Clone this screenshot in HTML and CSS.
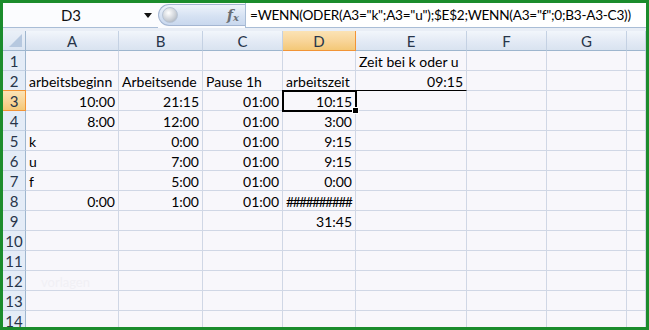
FILE: index.html
```html
<!DOCTYPE html>
<html lang="de">
<head>
    <meta charset="UTF-8">
    <title>arbeitszeit</title>
    <link rel="stylesheet" href="styles.css">
</head>
<body>
    <div class="frame">
        <div class="formula-bar">
            <div class="name-box">D3</div>
            <div class="name-drop">
                <svg width="8" height="5" viewBox="0 0 8 5"><path d="M0 0H8L4 5Z" fill="#111"/></svg>
            </div>
            <div class="fx-pill">
                <span class="knob"></span>
                <span class="fx">f<sub>x</sub></span>
            </div>
            <div class="formula">=WENN(ODER(A3="k";A3="u");$E$2;WENN(A3="f";0;B3-A3-C3))</div>
        </div>
        <div class="sheet" id="sheet"></div>
    </div>

    <script>
        const cols = ['A', 'B', 'C', 'D', 'E', 'F', 'G', ''];
        // jede Zeile: [A, B, C, D, E]  -- "#" vorne = Zahl, rechtsbündig
        const rows = [
            ['', '', '', '', 'Zeit bei k oder u'],
            ['arbeitsbeginn', 'Arbeitsende', 'Pause 1h', 'arbeitszeit', '#09:15'],
            ['#10:00', '#21:15', '#01:00', '#10:15', ''],
            ['#8:00', '#12:00', '#01:00', '#3:00', ''],
            ['k', '#0:00', '#01:00', '#9:15', ''],
            ['u', '#7:00', '#01:00', '#9:15', ''],
            ['f', '#5:00', '#01:00', '#0:00', ''],
            ['#0:00', '#1:00', '#01:00', '###########', ''],
            ['', '', '', '#31:45', ''],
            [], [], [], [], []
        ];

        const sheet = document.getElementById('sheet');

        function cell(cls, text) {
            const div = document.createElement('div');
            div.className = cls;
            if (text) div.textContent = text;
            sheet.appendChild(div);
            return div;
        }

        // Kopfzeile
        cell('corner');
        cols.forEach(c => cell(c === 'D' ? 'col-head active' : 'col-head', c));

        rows.forEach((row, r) => {
            const n = r + 1;
            cell(n === 3 ? 'row-head active' : 'row-head', String(n));
            for (let i = 0; i < cols.length; i++) {
                let value = row[i] || '';
                let cls = 'cell';
                if (value.startsWith('#')) {
                    cls += ' num';
                    value = value.slice(1);
                }
                if (value.startsWith('###')) cls += ' overflow';
                const div = cell(cls, value);
                if (n === 2 && i === 4) div.classList.add('underline');
                if (n === 3 && i === 3) {
                    div.classList.add('selected');
                    const handle = document.createElement('span');
                    handle.className = 'fill-handle';
                    div.appendChild(handle);
                }
                if (n === 12 && i === 0) {
                    const mark = document.createElement('span');
                    mark.className = 'watermark';
                    mark.textContent = 'vorlagen';
                    div.appendChild(mark);
                }
            }
        });
    </script>
</body>
</html>
```

FILE: styles.css
```css
body {
    margin: 0;
    font-family: Lato, "Open Sans", sans-serif;
    font-size: 14px;
    color: #000;
}
.frame {
    width: 649px;
    height: 330px;
    box-sizing: border-box;
    border: 3px solid #1b8c2c;
    overflow: hidden;
    background: #f8f7fb;
}
.formula-bar {
    display: flex;
    align-items: stretch;
    height: 28px;
    box-sizing: border-box;
    border-bottom: 3px solid #e9eef6;
    background: #fbfcfe;
}
.name-box {
    flex: 0 0 134px;
    padding-left: 2px;
    box-sizing: border-box;
    display: flex;
    align-items: center;
    justify-content: center;
    color: #111;
    font-size: 15px;
    border-bottom: 1px solid #a9bdd6;
}
.name-drop {
    flex: 0 0 21px;
    display: flex;
    align-items: center;
    justify-content: center;
    border-bottom: 1px solid #a9bdd6;
}
.fx-pill {
    flex: 0 0 87px;
    margin-top: 1px;
    height: 22px;
    box-sizing: border-box;
    border: 1px solid #a4b6d2;
    border-right: none;
    border-radius: 12px 0 0 12px;
    background: linear-gradient(#eef3fb, #d6e2f3 55%, #c9d8ee);
    display: flex;
    align-items: center;
    justify-content: space-between;
    padding: 0 6px 0 3px;
}
.knob {
    width: 14px;
    height: 14px;
    border-radius: 50%;
    background: radial-gradient(circle at 40% 35%, #ffffff, #c8cdd4 60%, #9aa3ae);
    border: 1px solid #b7c4d6;
}
.fx {
    font-family: "DejaVu Serif", "Liberation Serif", serif;
    font-style: italic;
    font-weight: bold;
    font-size: 14px;
    color: #6a6e74;
}
.fx sub {
    font-size: 10px;
    vertical-align: baseline;
    position: relative;
    top: 1px;
}
.formula {
    flex: 1;
    min-width: 0;
    overflow: hidden;
    display: flex;
    align-items: center;
    padding-left: 4px;
    font-size: 13.6px;
    letter-spacing: -0.25px;
    background: #fff;
    border-left: 1px solid #a9bdd6;
    border-bottom: 1px solid #a9bdd6;
    white-space: nowrap;
}
.sheet {
    display: grid;
    grid-template-columns: 23px 93px 84px 80px 73px 111px 80px 80px 1fr;
    grid-auto-rows: 20px;
}
.sheet > div {
    box-sizing: border-box;
    border-right: 1px solid #d0d7e5;
    border-bottom: 1px solid #d0d7e5;
    white-space: nowrap;
    line-height: 21px;
}
.corner {
    background: linear-gradient(#eaf0f8, #dbe5f2);
    position: relative;
    border-right-color: #9eb6ce !important;
    border-bottom-color: #9eb6ce !important;
}
.corner::after {
    content: "";
    position: absolute;
    right: 3px;
    bottom: 3px;
    border-left: 13px solid transparent;
    border-bottom: 13px solid #b6c8df;
}
.col-head {
    background: linear-gradient(#f2f6fb, #e3eaf5 55%, #d9e3f0);
    border-right-color: #c4d1e3 !important;
    border-bottom-color: #9eb6ce !important;
    text-align: center;
    color: #27354a;
    font-size: 15px;
}
.row-head {
    background: #e4ecf7;
    border-right-color: #9eb6ce !important;
    border-bottom-color: #c4d1e3 !important;
    text-align: center;
    color: #27354a;
    font-size: 15px;
}
.col-head.active,
.row-head.active {
    background: linear-gradient(#fbe3b5, #f8d497 55%, #f4c877);
    border-color: #f29436 !important;
    border-right: 1px solid #f29436;
}
.row-head.active {
    border-bottom: 1px solid #f29436;
    border-top: 1px solid #f29436;
    margin-top: -1px;
}
.cell {
    padding: 0 3px;
}
.cell.num {
    text-align: right;
}
.cell.overflow {
    letter-spacing: -1.6px;
    padding-right: 4px;
}
.cell.underline {
    border-bottom-color: #000 !important;
}
.cell.selected {
    position: relative;
    outline: 2px solid #000;
    outline-offset: -1px;
    z-index: 1;
}
.fill-handle {
    position: absolute;
    right: -4px;
    bottom: -4px;
    width: 5px;
    height: 5px;
    background: #000;
    border: 1px solid #fff;
}
.watermark {
    position: relative;
    left: 12px;
    color: #f1f0f5;
    font-size: 13px;
}
```
